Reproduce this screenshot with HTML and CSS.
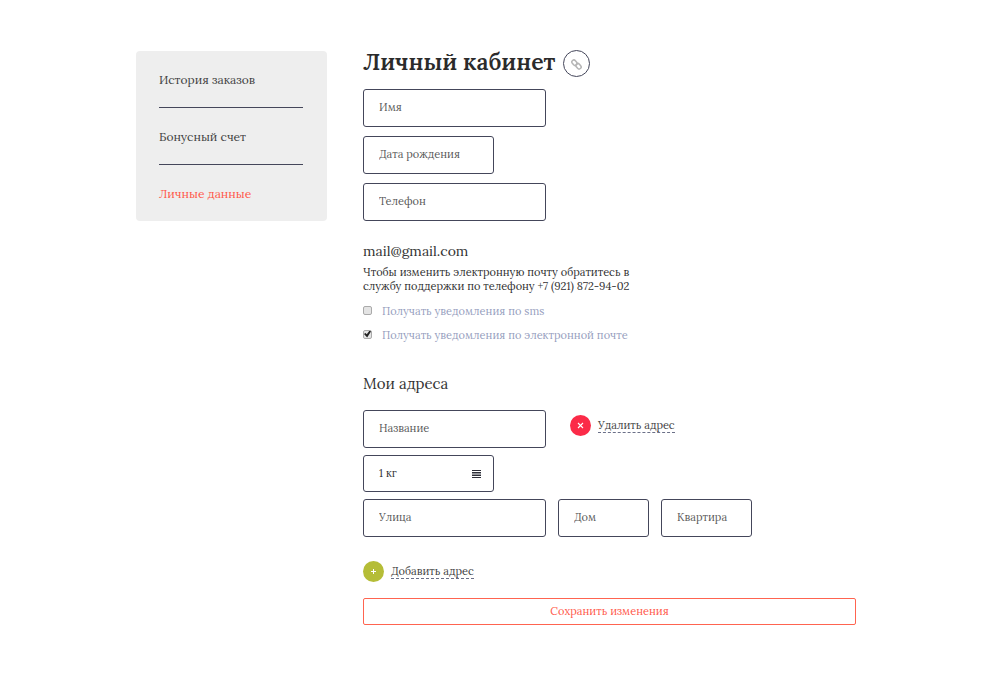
FILE: index.html
```html
<!DOCTYPE html>
<html lang="ru">
<head>
    <meta charset="UTF-8">
    <meta name="viewport" content="width=device-width, initial-scale=1.0">
    <title>Личный кабинет</title>
    <link rel="stylesheet" href="styles.css">
</head>
<body>
    <div class="container">
        <nav class="sidebar">
            <a href="#orders">История заказов</a>
            <a href="#bonus">Бонусный счет</a>
            <a href="#profile" class="active">Личные данные</a>
        </nav>

        <main class="content">
            <div class="title">
                <h1>Личный кабинет</h1>
                <a href="#link" class="title-link" aria-label="Ссылка">
                    <svg width="11" height="11" viewBox="0 0 22 22" fill="none" stroke="#b5b5b5" stroke-width="3">
                        <rect x="1" y="3.5" width="12" height="8" rx="4" transform="rotate(50 7 7.5)"/>
                        <rect x="9" y="10.5" width="12" height="8" rx="4" transform="rotate(50 15 14.5)"/>
                    </svg>
                </a>
            </div>

            <form>
                <div class="fields">
                    <input type="text" class="field" name="name" placeholder="Имя" aria-label="Имя">
                    <input type="text" class="field field-medium" name="birthday" placeholder="Дата рождения" aria-label="Дата рождения">
                    <input type="tel" class="field" name="phone" placeholder="Телефон" aria-label="Телефон">
                </div>

                <div class="email">mail@gmail.com</div>
                <p class="hint">Чтобы изменить электронную почту обратитесь в службу поддержки по телефону +7 (921) 872-94-02</p>

                <div class="checks">
                    <div class="check">
                        <input type="checkbox" id="sms" name="sms">
                        <label for="sms">Получать уведомления по sms</label>
                    </div>
                    <div class="check">
                        <input type="checkbox" id="mail" name="mail" checked>
                        <label for="mail">Получать уведомления по электронной почте</label>
                    </div>
                </div>

                <h2>Мои адреса</h2>
                <div class="address">
                    <div class="row">
                        <input type="text" class="field" name="title" placeholder="Название" aria-label="Название">
                        <button type="button" class="action action-delete">
                            <span class="circle">
                                <svg width="7" height="7" viewBox="0 0 7 7" stroke="#fff" stroke-width="1.1"><path d="M1 1l5 5M6 1L1 6"/></svg>
                            </span>
                            <span class="action-text">Удалить адрес</span>
                        </button>
                    </div>
                    <div class="select">
                        <select class="field" name="weight" aria-label="Вес">
                            <option>1 кг</option>
                            <option>2 кг</option>
                        </select>
                        <svg class="select-icon" width="9" height="8" viewBox="0 0 9 8" fill="#2d2e38"><path d="M0 0h9v1H0zM0 2h9v1.5H0zM0 4.5h9V6H0zM0 7h9v1H0z"/></svg>
                    </div>
                    <div class="row">
                        <input type="text" class="field" name="street" placeholder="Улица" aria-label="Улица">
                        <input type="text" class="field field-small" name="house" placeholder="Дом" aria-label="Дом">
                        <input type="text" class="field field-small" name="flat" placeholder="Квартира" aria-label="Квартира">
                    </div>
                </div>

                <button type="button" class="action action-add">
                    <span class="circle">
                        <svg width="7" height="7" viewBox="0 0 7 7" stroke="#fff"><path d="M3.5 1v5M1 3.5h5"/></svg>
                    </span>
                    <span class="action-text">Добавить адрес</span>
                </button>

                <button type="submit" class="save">Сохранить изменения</button>
            </form>
        </main>
    </div>
</body>
</html>
```
FILE: styles.css
```css
* {
    box-sizing: border-box;
}
body {
    margin: 0;
    background-color: #fff;
    color: #333;
    font-family: Lora, "Liberation Serif", serif;
    font-size: 11px;
}
.container {
    display: flex;
    align-items: flex-start;
    gap: 36px;
    padding: 50px 144px 50px 136px;
}
.sidebar {
    flex: none;
    width: 191px;
    margin-top: 1px;
    padding: 0 24px 0 23px;
    background-color: #eee;
    border-radius: 4px;
}
.sidebar a {
    display: block;
    padding: 20px 0 18px;
    border-bottom: 1px solid #44465a;
    color: #444;
    font-size: 12px;
    line-height: 18px;
    text-decoration: none;
}
.sidebar a.active {
    border-bottom: none;
    color: #ff5a4c;
}
.content {
    flex: 1;
    min-width: 0;
}
.title {
    display: flex;
    align-items: flex-start;
    gap: 8px;
    margin-bottom: 12px;
}
h1 {
    margin: 0;
    color: #2b2b2b;
    font-size: 23px;
    font-weight: 600;
    line-height: 24px;
}
.title-link {
    display: flex;
    align-items: center;
    justify-content: center;
    width: 27px;
    height: 27px;
    padding-top: 2px;
    border: 1px solid #44465a;
    border-radius: 50%;
}
.fields {
    display: flex;
    flex-direction: column;
    gap: 9px;
}
.field {
    width: 183px;
    height: 38px;
    padding: 0 15px 2px;
    border: 1px solid #44465a;
    border-radius: 3px;
    background-color: #fff;
    color: #333;
    font-family: inherit;
    font-size: 11px;
}
.field::placeholder {
    color: #5c5c5c;
    opacity: 1;
}
.field-medium {
    width: 131px;
}
.field-small {
    width: 91px;
}
.email {
    margin-top: 20px;
    font-size: 14px;
    line-height: 20px;
}
.hint {
    max-width: 280px;
    margin: 4px 0 10px;
    line-height: 14px;
}
.checks {
    display: flex;
    flex-direction: column;
    gap: 8px;
}
.check {
    display: flex;
    align-items: center;
    gap: 10px;
    color: #989fc0;
    line-height: 16px;
}
.check input {
    display: grid;
    place-items: center;
    appearance: none;
    width: 9px;
    height: 9px;
    margin: 0 0 2px;
    border: 1px solid #aaa;
    border-radius: 2px;
    background-color: #e4e4e4;
}
.check input:checked::before {
    content: "";
    width: 7px;
    height: 7px;
    background-color: #222;
    clip-path: polygon(0 50%, 20% 35%, 40% 55%, 80% 0, 100% 15%, 45% 100%);
}
h2 {
    margin: 29px 0 14px;
    font-size: 15px;
    font-weight: normal;
    line-height: 24px;
}
.address {
    display: flex;
    flex-direction: column;
    gap: 7px;
}
.row {
    display: flex;
    gap: 12px;
}
.select {
    position: relative;
    width: 131px;
}
.select .field {
    display: block;
    width: 100%;
    height: 37px;
    appearance: none;
}
.select-icon {
    position: absolute;
    top: 15px;
    right: 13px;
    pointer-events: none;
}
.action {
    display: flex;
    align-items: center;
    gap: 7px;
    padding: 0;
    border: none;
    background: none;
    color: #444;
    font-family: inherit;
    font-size: 11px;
    cursor: pointer;
}
.action-delete {
    align-self: flex-start;
    margin: 5px 0 0 12px;
}
.action-add {
    margin-top: 24px;
}
.circle {
    display: flex;
    align-items: center;
    justify-content: center;
    width: 21px;
    height: 21px;
    border-radius: 50%;
    background-color: #b5bd37;
}
.action-delete .circle {
    background-color: #fb2b48;
}
.action-text {
    border-bottom: 1px dashed #6b7088;
    line-height: 14px;
}
.save {
    width: 100%;
    height: 27px;
    margin-top: 16px;
    padding: 0 0 2px;
    border: 1px solid #ff6450;
    border-radius: 2px;
    background-color: #fff;
    color: #ff5a4c;
    font-family: inherit;
    font-size: 11px;
    cursor: pointer;
}
```
